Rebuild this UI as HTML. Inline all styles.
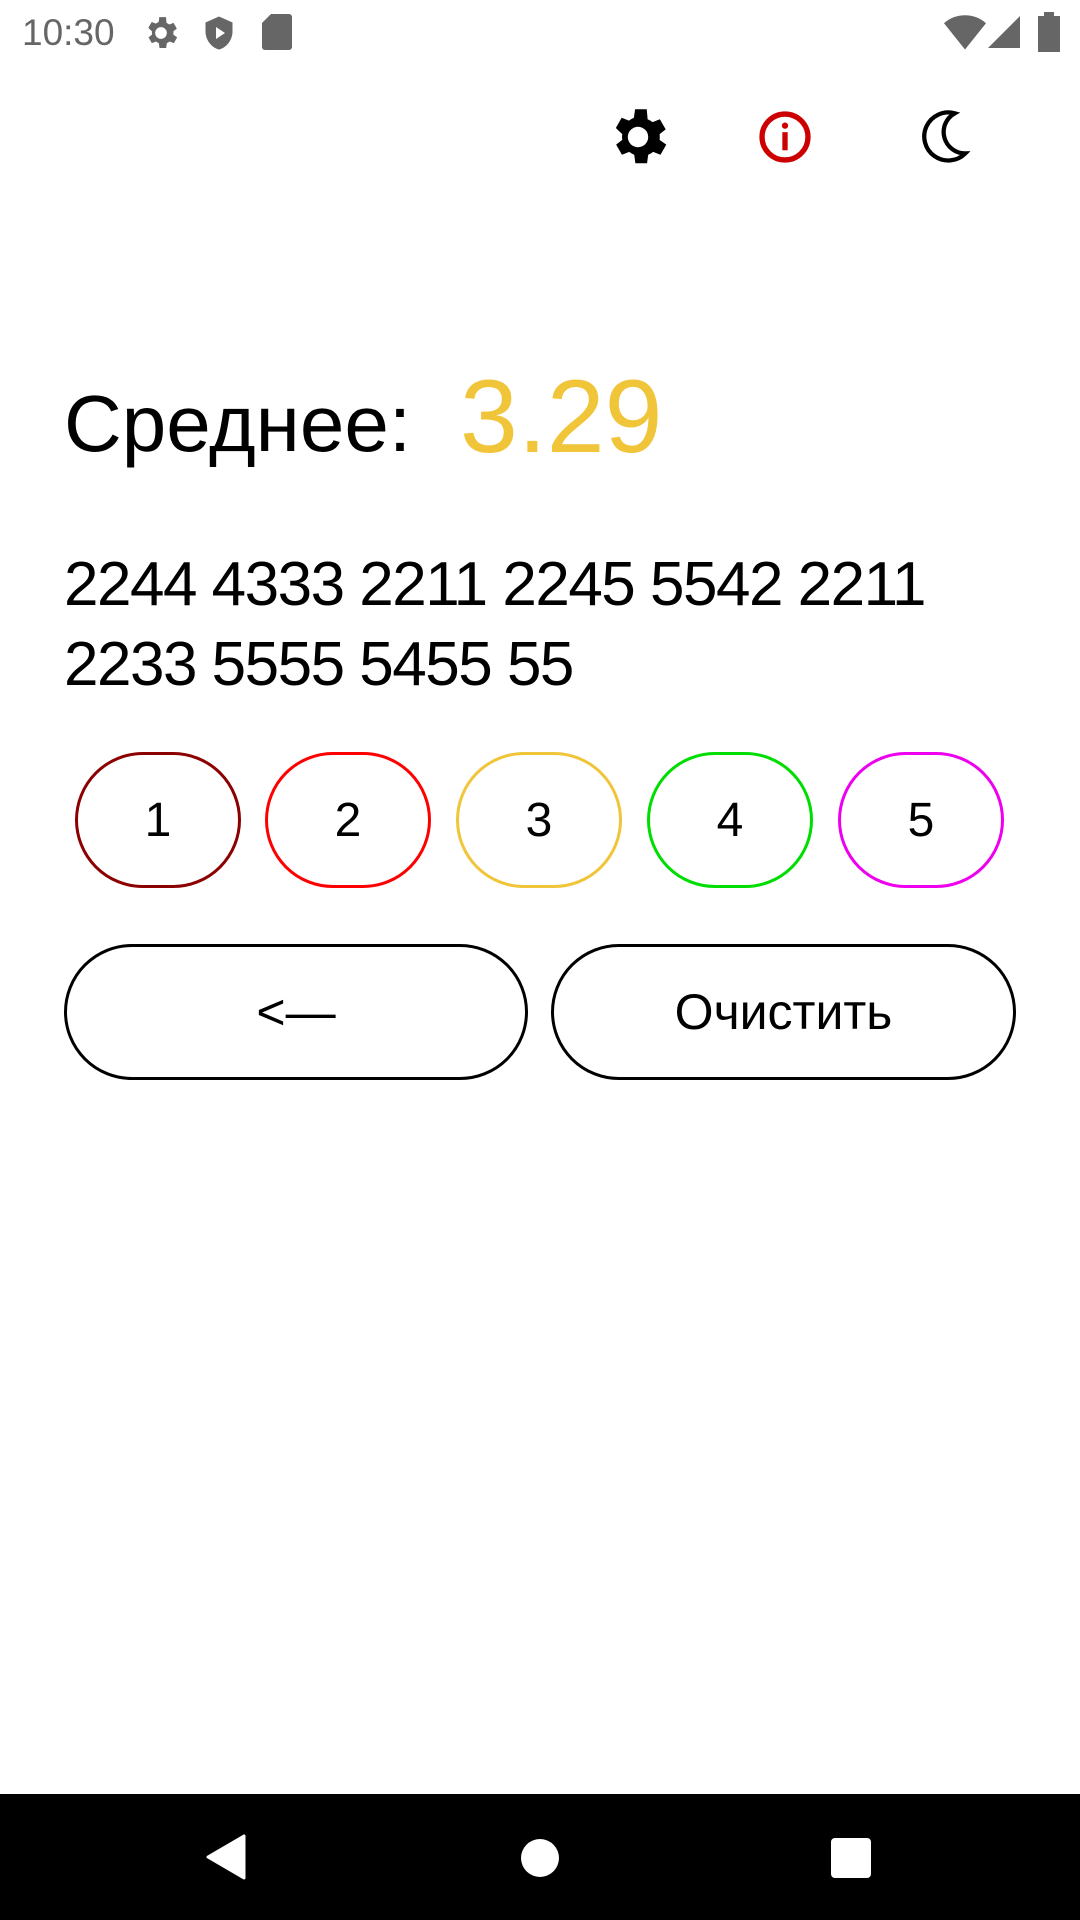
<!DOCTYPE html>
<html><head><meta charset="utf-8"><style>
body{margin:0;width:1080px;height:1920px;background:#fff;position:relative;overflow:hidden;font-family:"Liberation Sans","DejaVu Sans",sans-serif;}
.a{position:absolute}
.c{position:absolute;top:752px;width:166px;height:136px;border-radius:68px;box-sizing:border-box;border:3px solid;display:flex;align-items:center;justify-content:center;font-size:48px;color:#000}
.b{position:absolute;top:944px;height:136px;border-radius:68px;box-sizing:border-box;border:3px solid #000;display:flex;align-items:center;justify-content:center;font-size:50px;color:#000}
</style></head><body>
<div class="a" style="left:22px;top:12px;font-size:37px;color:#666">10:30</div>
<svg class="a" style="left:141px;top:13px" width="40" height="40" viewBox="0 0 24 24"><path fill="#666" d="M19.4 13a7.5 7.5 0 000-2l2.1-1.6-2-3.5-2.5 1a7 7 0 00-1.7-1L15 2.5h-4l-.4 2.9a7 7 0 00-1.7 1l-2.5-1-2 3.5L6.6 11a7.5 7.5 0 000 2l-2.1 1.6 2 3.5 2.5-1a7 7 0 001.7 1l.4 2.9h4l.4-2.9a7 7 0 001.7-1l2.5 1 2-3.5zM12 15.5a3.5 3.5 0 110-7 3.5 3.5 0 010 7z"/></svg>
<svg class="a" style="left:201px;top:14px" width="36" height="38" viewBox="0 0 24 24"><path fill="#666" d="M12 1L3 5v6c0 5.5 3.8 10.7 9 12 5.2-1.3 9-6.5 9-12V5z"/><path fill="#fff" d="M10 8v8l6-4z"/></svg>
<svg class="a" style="left:262px;top:14px" width="30" height="36" viewBox="0 0 20 24"><path fill="#666" d="M6 0h12a2 2 0 012 2v20a2 2 0 01-2 2H2a2 2 0 01-2-2V6z"/></svg>
<svg class="a" style="left:944px;top:14px" width="42" height="36" viewBox="0 0 24 20"><path fill="#666" d="M12 20L0 5a18 18 0 0124 0z"/></svg>
<svg class="a" style="left:988px;top:14px" width="32" height="36" viewBox="0 0 20 20"><path fill="#666" d="M20 0v20H0z"/></svg>
<svg class="a" style="left:1038px;top:12px" width="22" height="40" viewBox="0 0 11 20"><path fill="#666" d="M3 0h5v2h3v18H0V2h3z"/></svg>

<svg class="a" style="left:603px;top:102px" width="70" height="70" viewBox="0 0 24 24"><path fill="#000" d="M19.4 13a7.5 7.5 0 000-2l2.1-1.6-2-3.5-2.5 1a7 7 0 00-1.7-1L15 2.5h-4l-.4 2.9a7 7 0 00-1.7 1l-2.5-1-2 3.5L6.6 11a7.5 7.5 0 000 2l-2.1 1.6 2 3.5 2.5-1a7 7 0 001.7 1l.4 2.9h4l.4-2.9a7 7 0 001.7-1l2.5 1 2-3.5zM12 15.5a3.5 3.5 0 110-7 3.5 3.5 0 010 7z"/></svg>
<svg class="a" style="left:756px;top:108px" width="58" height="58" viewBox="0 0 24 24"><circle cx="12" cy="12" r="9.5" fill="none" stroke="#c00" stroke-width="2.2"/><rect x="10.9" y="10" width="2.2" height="7.5" fill="#c00"/><circle cx="12" cy="7.3" r="1.3" fill="#c00"/></svg>
<svg class="a" style="left:912px;top:104px" width="64" height="64" viewBox="0 0 24 24"><path fill="none" stroke="#000" stroke-width="1.6" d="M16 3.5A9 9 0 1020 18.5 8 8 0 0116 3.5z"/></svg>

<div class="a" style="left:64px;top:378px;font-size:80px;color:#000">Среднее:</div>
<div class="a" style="left:460px;top:358px;font-size:104px;color:#f0c53a">3.29</div>
<div class="a" style="left:64px;top:545px;font-size:62px;letter-spacing:-1.5px;line-height:80px;color:#000">2244 4333 2211 2245 5542 2211<br>2233 5555 5455 55</div>

<div class="c" style="left:75px;border-color:#8b0000">1</div>
<div class="c" style="left:265px;border-color:#f00">2</div>
<div class="c" style="left:456px;border-color:#f0c53a">3</div>
<div class="c" style="left:647px;border-color:#0d0">4</div>
<div class="c" style="left:838px;border-color:#e0e">5</div>

<div class="b" style="left:64px;width:464px">&lt;—</div>
<div class="b" style="left:551px;width:465px">Очистить</div>

<div class="a" style="left:0;top:1794px;width:1080px;height:126px;background:#000"></div>
<svg class="a" style="left:204px;top:1834px" width="42" height="46" viewBox="0 0 42 46"><path fill="#fff" d="M40 2v42L4 23z" stroke="#fff" stroke-width="3" stroke-linejoin="round"/></svg>
<div class="a" style="left:521px;top:1839px;width:38px;height:38px;border-radius:50%;background:#fff"></div>
<div class="a" style="left:831px;top:1838px;width:40px;height:40px;border-radius:4px;background:#fff"></div>
</body></html>
